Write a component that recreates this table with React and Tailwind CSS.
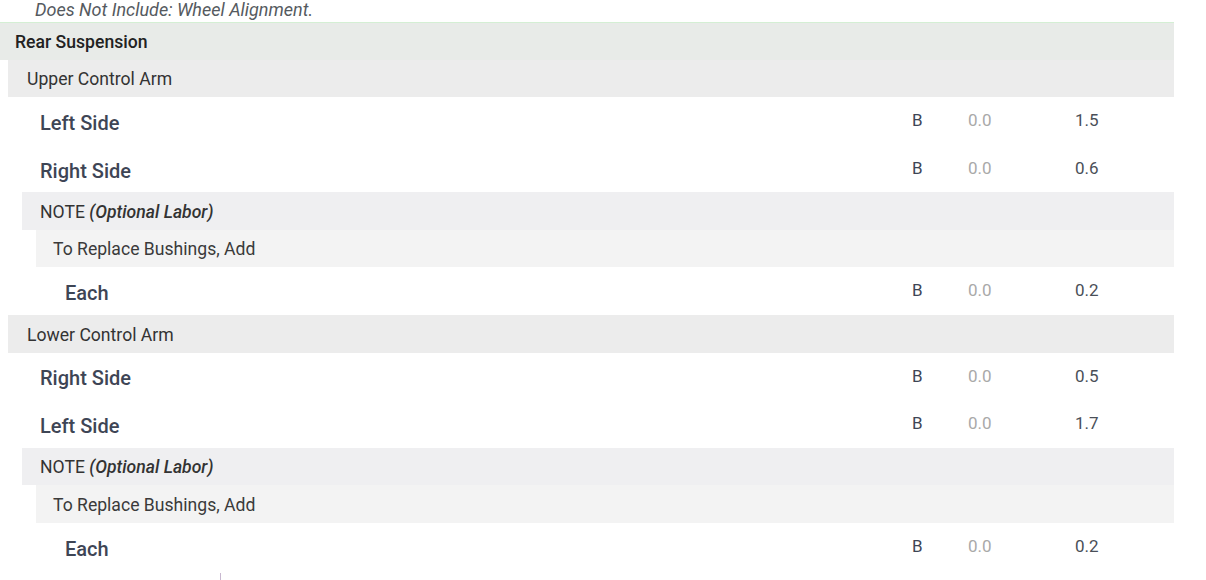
import React from 'react';

const font = { fontFamily: 'Roboto, "Liberation Sans", sans-serif' };

function HeaderRow({ indent, bg, className = '', children }) {
    return (
        <div className={`h-[37.5px] flex items-center pt-[2px] ${indent} ${bg} ${className}`}>
            {children}
        </div>
    );
}

function ItemRow({ label, labelPad, code = 'B', base = '0.0', value }) {
    return (
        <div className="h-[47.7px] flex items-center pt-[4px]">
            <div className={`flex-1 ${labelPad} text-[20px] font-medium text-[#3e4555]`}>{label}</div>
            <div className="w-[56px] text-[17px] text-[#3e4555] -mt-[4px]">{code}</div>
            <div className="w-[107px] text-[17px] text-[#a9a9a9] -mt-[4px]">{base}</div>
            <div className="w-[99px] text-[17px] text-[#4a4f58] -mt-[4px]">{value}</div>
        </div>
    );
}

function Group({ title, items }) {
    return (
        <>
            <HeaderRow indent="ml-[8px] pl-[19px]" bg="bg-[#ececec]">
                <span className="text-[17.6px] text-[#333]">{title}</span>
            </HeaderRow>
            {items.map((it, idx) => (
                <ItemRow key={idx} label={it[0]} labelPad="pl-[40px]" value={it[1]} />
            ))}
            <HeaderRow indent="ml-[22px] pl-[18px]" bg="bg-[#efeff1]">
                <span className="text-[17.6px] text-[#333]">
                    NOTE <span className="italic font-medium">(Optional Labor)</span>
                </span>
            </HeaderRow>
            <HeaderRow indent="ml-[36px] pl-[17px]" bg="bg-[#f3f3f3]">
                <span className="text-[17.6px] text-[#3a3a3a]">To Replace Bushings, Add</span>
            </HeaderRow>
            <ItemRow label="Each" labelPad="pl-[65px]" value="0.2" />
        </>
    );
}

export default function App() {
    return (
        <div className="w-[1206px] h-[580px] bg-white overflow-hidden relative" style={font}>
            <div className="w-[1174px]">
                <div className="h-[22px] pl-[35px] text-[18px] italic text-[#555a60] leading-[19px]">
                    Does Not Include: Wheel Alignment.
                </div>
                <HeaderRow indent="pl-[15px]" bg="bg-[#e8ebe8]" className="border-t border-[#d4efd4]">
                    <span className="text-[17.6px] font-medium text-[#222]">Rear Suspension</span>
                </HeaderRow>
                <Group title="Upper Control Arm" items={[['Left Side', '1.5'], ['Right Side', '0.6']]} />
                <Group title="Lower Control Arm" items={[['Right Side', '0.5'], ['Left Side', '1.7']]} />
            </div>
            <div className="absolute left-[220px] top-[573px] w-px h-[7px] bg-[#c8b8d0]" />
        </div>
    );
}
